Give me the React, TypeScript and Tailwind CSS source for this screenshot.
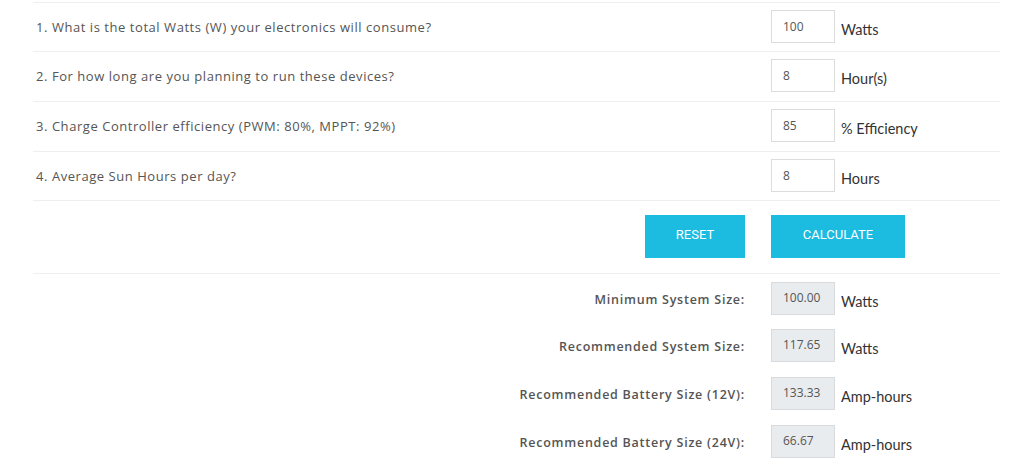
import React from "react";

const questions = [
  { q: "1. What is the total Watts (W) your electronics will consume?", v: "100", u: "Watts", pb: "pb-[8px]" },
  { q: "2. For how long are you planning to run these devices?", v: "8", u: "Hour(s)", pb: "pb-[9px]" },
  { q: "3. Charge Controller efficiency (PWM: 80%, MPPT: 92%)", v: "85", u: "% Efficiency", pb: "pb-[9px]" },
  { q: "4. Average Sun Hours per day?", v: "8", u: "Hours", pb: "pb-[8px]" },
];

const results = [
  { l: "Minimum System Size:", v: "100.00", u: "Watts", mt: "mt-[8px]" },
  { l: "Recommended System Size:", v: "117.65", u: "Watts", mt: "mt-[14px]" },
  { l: "Recommended Battery Size (12V):", v: "133.33", u: "Amp-hours", mt: "mt-[15px]" },
  { l: "Recommended Battery Size (24V):", v: "66.67", u: "Amp-hours", mt: "mt-[15px]" },
];

export default function App() {
  return (
    <div className="w-[1024px] h-[471px] bg-white overflow-hidden pt-[2px]">
      <div className="ml-[33px] w-[967px]">
        {questions.map((r) => (
          <div
            key={r.q}
            className={`flex items-center border-t border-[#efefef] pt-[7px] ${r.pb}`}
          >
            <div className="flex-1 pl-[3px] pt-[3px] text-[13px] tracking-[0.55px] text-[#555] font-['Open_Sans',sans-serif]">
              {r.q}
            </div>
            <div className="w-[229px] flex items-center">
              <div className="w-[64px] h-[33px] border border-[#dcdcdc] bg-white pl-[11px] pt-[8px] text-[12px] text-[#555] font-['Open_Sans',sans-serif] leading-[16px]">
                {r.v}
              </div>
              <span className="ml-[6px] pt-[7px] text-[14.5px] text-[#333] font-['Lato',sans-serif]">
                {r.u}
              </span>
            </div>
          </div>
        ))}
        <div className="flex border-t border-[#efefef] pt-[14px] pb-[15px]">
          <div className="flex-1 flex justify-end">
            <button className="w-[100px] h-[43px] bg-[#1cbbe0] text-white text-[13px] font-['Roboto',sans-serif] pb-[3px] mr-[26px]">
              RESET
            </button>
          </div>
          <div className="w-[229px]">
            <button className="w-[134px] h-[43px] bg-[#1cbbe0] text-white text-[13px] font-['Roboto',sans-serif] pb-[3px]">
              CALCULATE
            </button>
          </div>
        </div>
        <div className="border-t border-[#efefef]">
          {results.map((r) => (
            <div key={r.l} className={`flex items-center ${r.mt}`}>
              <div className="flex-1 text-right pr-[26px] pt-[3px] text-[12.5px] font-semibold tracking-[0.75px] text-[#555] font-['Open_Sans',sans-serif]">
                {r.l}
              </div>
              <div className="w-[229px] flex items-center">
                <div className="w-[64px] h-[33px] border border-[#d8dadc] bg-[#e9ecef] pl-[11px] pt-[7px] text-[12px] text-[#555] font-['Open_Sans',sans-serif] leading-[16px]">
                  {r.v}
                </div>
                <span className="ml-[6px] pt-[7px] text-[14.5px] text-[#333] font-['Lato',sans-serif]">
                  {r.u}
                </span>
              </div>
            </div>
          ))}
        </div>
      </div>
    </div>
  );
}
